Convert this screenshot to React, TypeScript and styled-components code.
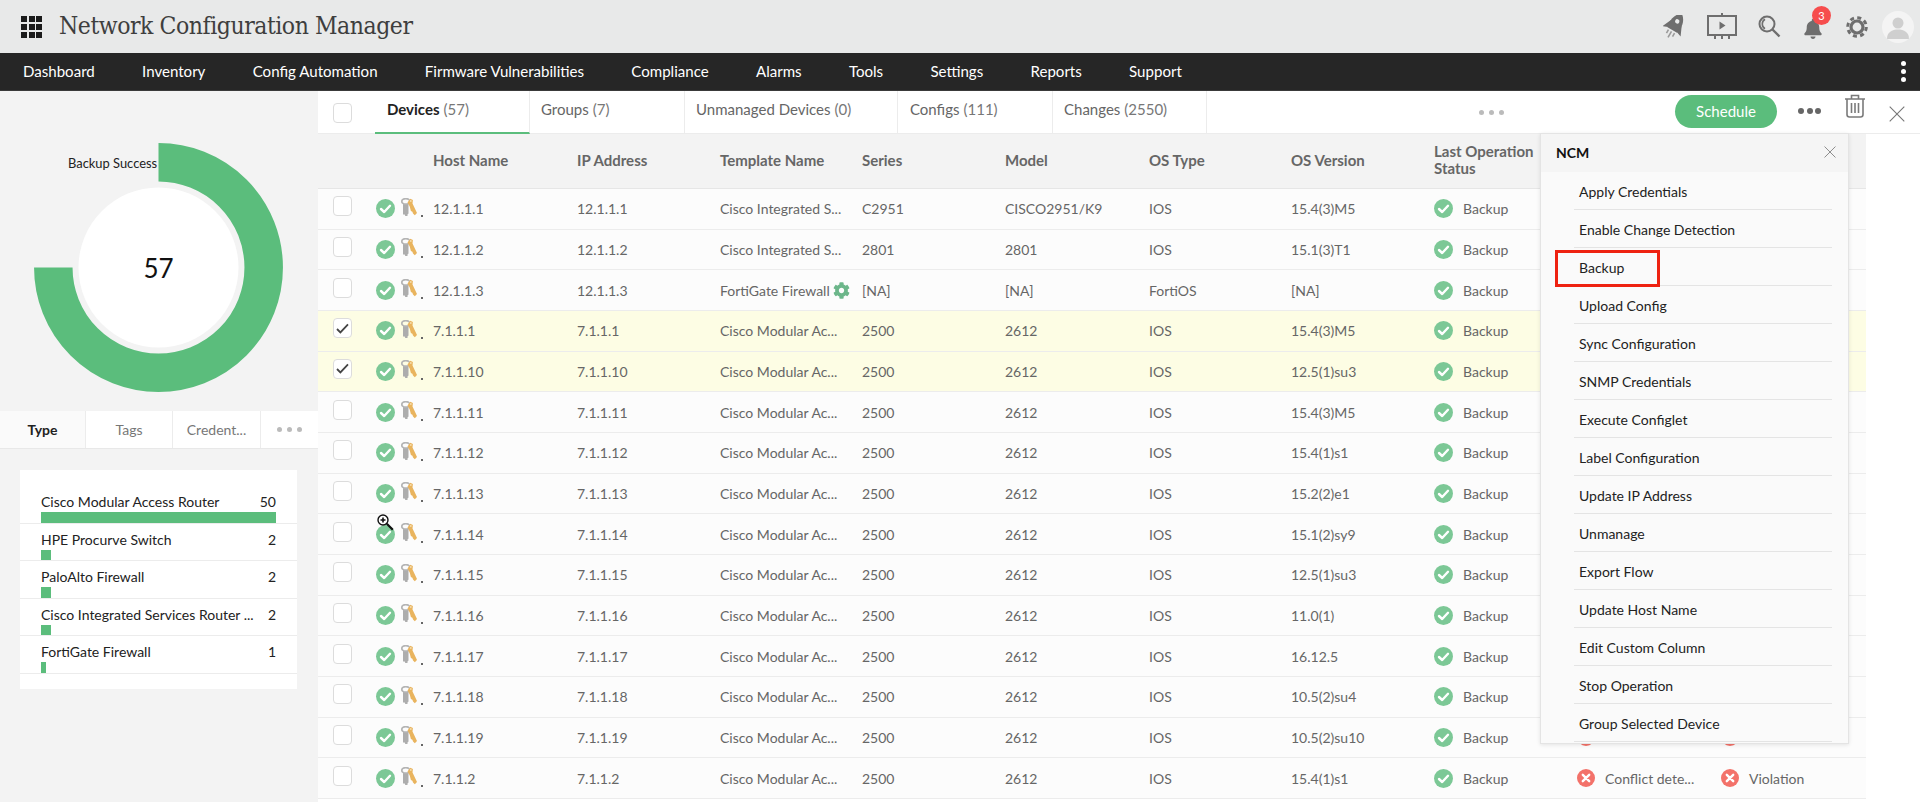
import React from "react";
import styled, { createGlobalStyle } from "styled-components";
import { FaBell, FaCog } from "react-icons/fa";

const Global = createGlobalStyle`
  html, body { margin: 0; padding: 0; background: #fff; }
  body { font-family: Lato, "Noto Sans", sans-serif; overflow: hidden; }
  * { box-sizing: border-box; }
`;

const Page = styled.div`
  width: 1920px;
  height: 802px;
  display: flex;
  flex-direction: column;
  overflow: hidden;
`;

/* ---------- top header ---------- */
const Header = styled.header`
  height: 53px;
  background: #e8e9e9;
  display: flex;
  align-items: center;
  padding-left: 21px;
  flex: none;
`;
const Grid = styled.div`
  display: grid;
  grid-template-columns: repeat(3, 6px);
  grid-auto-rows: 6px;
  gap: 2px 1.5px;
  margin-right: 17px;
`;
const GridDot = styled.i`
  background: #1b1b1b;
  display: block;
`;
const Title = styled.h1`
  margin: -2px 0 0;
  font-family: "DejaVu Serif Condensed", "DejaVu Serif", serif;
  font-stretch: condensed;
  font-weight: 400;
  font-size: 24.5px;
  letter-spacing: -0.46px;
  color: #3e3e3e;
  white-space: nowrap;
`;
const HeaderIcons = styled.div`
  margin-left: auto;
  display: flex;
  align-items: center;
  color: #6e6e6e;
  position: relative;
  height: 53px;
`;
const HIcon = styled.span<{ $w: number; $ml: number }>`
  width: ${(p) => p.$w}px;
  margin-left: ${(p) => p.$ml}px;
  display: flex;
  justify-content: center;
  align-items: center;
  position: relative;
`;
const Badge = styled.span`
  position: absolute;
  top: -9px;
  left: 9px;
  width: 19px;
  height: 19px;
  border-radius: 50%;
  background: #f64d4d;
  color: #fff;
  font-size: 11px;
  display: flex;
  align-items: center;
  justify-content: center;
`;
const Avatar = styled.span`
  width: 32px;
  height: 32px;
  border-radius: 50%;
  background: #f4f4f4;
  margin: 0 6px 0 14px;
  overflow: hidden;
  display: block;
`;

/* ---------- nav ---------- */
const Nav = styled.nav`
  height: 38px;
  flex: none;
  background: #262626;
  border-bottom: 1px solid #3a3a3a;
  display: flex;
  align-items: center;
  padding: 0 14px 2px 23px;
  gap: 47.3px;
`;
const NavItem = styled.a`
  color: #fff;
  font-size: 15.07px;
  white-space: nowrap;
`;
const NavMore = styled.span`
  margin: 2px 0 0 auto;
  display: flex;
  flex-direction: column;
  gap: 2.5px;
`;
const NavDot = styled.i`
  width: 5.5px;
  height: 5.5px;
  border-radius: 50%;
  background: #fff;
  display: block;
`;

/* ---------- body ---------- */
const Body = styled.div`
  flex: 1;
  display: flex;
  min-height: 0;
`;
const Side = styled.aside`
  width: 318px;
  flex: none;
  background: #f3f3f3;
  display: flex;
  flex-direction: column;
`;
const ChartBox = styled.div`
  height: 320px;
  position: relative;
  flex: none;
`;
const ChartLabel = styled.span`
  position: absolute;
  left: 68px;
  top: 64px;
  font-size: 12.9px;
  color: #222;
`;
const ChartValue = styled.span`
  position: absolute;
  left: 0;
  width: 317px;
  top: 161px;
  text-align: center;
  font-size: 26px;
  color: #111;
`;
const SideTabs = styled.div`
  display: flex;
  height: 38px;
  background: #fff;
  flex: none;
  border-bottom: 1px solid #e8e8e8;
`;
const SideTab = styled.div<{ $active?: boolean; $w: number }>`
  width: ${(p) => p.$w}px;
  display: flex;
  align-items: center;
  justify-content: center;
  font-size: 14px;
  font-weight: ${(p) => (p.$active ? 700 : 400)};
  color: ${(p) => (p.$active ? "#222" : "#777")};
  background: ${(p) => (p.$active ? "#fafafa" : "#fff")};
  border-right: 1px solid #ececec;
  &:last-child { border-right: 0; }
`;
const Dots = styled.span<{ $color?: string; $size?: number; $gap?: number }>`
  display: inline-flex;
  gap: ${(p) => p.$gap ?? 5}px;
  i {
    display: block;
    width: ${(p) => p.$size ?? 5}px;
    height: ${(p) => p.$size ?? 5}px;
    border-radius: 50%;
    background: ${(p) => p.$color ?? "#bbb"};
  }
`;
const TypeCard = styled.div`
  margin: 21px 21px 0 20px;
  background: #fff;
  padding: 16px 0;
  height: 219px;
`;
const TypeRow = styled.div`
  height: 37.5px;
  border-bottom: 1px solid #ececec;
  padding: 6.4px 21px 0;
  display: flex;
  flex-direction: column;
`;
const TypeHead = styled.div`
  display: flex;
  justify-content: space-between;
  font-size: 14px;
  line-height: 19px;
  color: #222;
`;
const TypeName = styled.span`
  white-space: nowrap;
`;
const TypeBar = styled.div`
  height: 10.5px;
  margin-top: auto;
  background: #5bbd7c;
`;

/* ---------- main ---------- */
const Main = styled.main`
  flex: 1;
  position: relative;
  background: #fff;
  min-width: 0;
`;
const TabBar = styled.div`
  height: 43px;
  display: flex;
  align-items: stretch;
`;
const CheckCell = styled.div`
  width: 57px;
  flex: none;
  display: flex;
  align-items: center;
  padding: 2px 0 0 15px;
  border-bottom: 1px solid #ececec;
`;
const Tab = styled.div<{ $w: number; $active?: boolean; $pl?: number }>`
  width: ${(p) => p.$w}px;
  flex: none;
  display: flex;
  align-items: center;
  padding: 0 0 6px ${(p) => p.$pl ?? 11}px;
  font-size: 15px;
  color: #666;
  border-right: 1px solid #ececec;
  border-bottom: ${(p) => (p.$active ? "2px solid #5bbd7c" : "1px solid #ececec")};
  b { font-weight: 700; color: #222; margin-right: 4px; }
  span { color: #777; margin-left: 4px; }
  b + span { margin-left: 0; }
`;
const TabFill = styled.div`
  flex: 1;
  display: flex;
  align-items: center;
  padding-left: 272px;
  border-bottom: 1px solid #ececec;
`;
const ActionArea = styled.div`
  width: 245px;
  flex: none;
  display: flex;
  align-items: center;
  padding-bottom: 0;
  position: relative;
  border-bottom: 1px solid #ececec;
`;
const ScheduleBtn = styled.button`
  width: 102px;
  height: 33px;
  border: 0;
  border-radius: 17px;
  background: #5bbd7c;
  color: #fff;
  font-family: inherit;
  font-size: 15px;
  margin-top: -2px;
  flex: none;
`;
const MoreWrap = styled.span`
  margin: -2px 0 0 21px;
  display: inline-flex;
`;
const TrashWrap = styled.span`
  margin: -12px 0 0 23px;
  color: #777;
  display: inline-flex;
`;
const CloseWrap = styled.span`
  margin: 4px 0 0 23px;
  display: inline-flex;
`;

const Row = styled.div<{ $selected?: boolean }>`
  width: 1548px;
  height: 40.67px;
  display: grid;
  grid-template-columns: 115px 144px 143px 142px 143px 144px 142px 143px 143px 144px 145px;
  align-items: center;
  font-size: 14px;
  color: #666;
  background: ${(p) => (p.$selected ? "#fdfde4" : "#fcfcfc")};
  border-bottom: 1px solid #ececec;
`;
const HeadRow = styled(Row)`
  height: 55px;
  background: #f3f3f3;
  font-size: 15px;
  font-weight: 700;
  color: #666;
  border-bottom: 1px solid #e6e6e6;
  line-height: 17px;
  padding-bottom: 2px;
`;
const Cell = styled.div`
  white-space: nowrap;
  min-width: 0;
`;
const HeadCell = styled.div`
  padding-right: 10px;
`;
const TemplateCell = styled(Cell)`
  display: flex;
  align-items: center;
  gap: 3px;
`;
const FirstCell = styled.div`
  display: flex;
  align-items: center;
  padding-left: 15px;
  position: relative;
  height: 100%;
`;
const Box = styled.span<{ $checked?: boolean }>`
  width: 19px;
  height: 20px;
  border: 1px solid #dcdcdc;
  border-radius: 4px;
  background: #fff;
  flex: none;
  display: flex;
  align-items: center;
  justify-content: center;
`;
const RowBox = styled(Box)`
  margin-top: -5px;
`;
const StatusIcons = styled.span`
  display: flex;
  align-items: center;
  margin-left: 24px;
  gap: 6px;
`;
const KeyDot = styled.span`
  width: 2px;
  height: 2px;
  background: #666;
  margin: 15px 0 0 -2px;
  display: block;
`;
const Status = styled.div`
  display: flex;
  align-items: center;
  gap: 10px;
  white-space: nowrap;
  min-width: 0;
`;
const Cursor = styled.svg`
  position: absolute;
  left: 59px;
  top: 0px;
`;

/* ---------- popup ---------- */
const Popup = styled.div`
  position: absolute;
  left: 1222px;
  top: 42px;
  width: 309px;
  height: 611px;
  background: #fafafa;
  border: 1px solid #e4e4e4;
  box-shadow: 0 1px 4px rgba(0, 0, 0, 0.1);
`;
const PopupHead = styled.div`
  height: 38px;
  background: #f5f5f5;
  padding: 0 12px 2px 15px;
  display: flex;
  align-items: center;
  justify-content: space-between;
  font-size: 14px;
  font-weight: 700;
  color: #111;
`;
const MenuItem = styled.div`
  height: 38px;
  margin: 0 16px 0 33px;
  padding: 2px 0 0 5px;
  border-bottom: 1px solid #e4e4e4;
  display: flex;
  align-items: center;
  font-size: 14px;
  color: #222;
`;
const RedBox = styled.span`
  position: absolute;
  left: 14px;
  top: 116px;
  width: 105px;
  height: 37px;
  border: 3px solid #ee2211;
`;

const CheckIcon = ({ size = 19 }: { size?: number }) => (
  <svg width={size} height={size} viewBox="0 0 19 19">
    <circle cx="9.5" cy="9.5" r="9.5" fill="#7cc896" />
    <path d="M5 10l3.2 3L14 6.8" fill="none" stroke="#fff" strokeWidth="2.4" strokeLinecap="round" strokeLinejoin="round" />
  </svg>
);
const CrossIcon = () => (
  <svg width="18" height="18" viewBox="0 0 18 18">
    <circle cx="9" cy="9" r="9" fill="#f3726a" />
    <path d="M5.8 5.8l6.4 6.4M12.2 5.8l-6.4 6.4" fill="none" stroke="#fff" strokeWidth="2.4" strokeLinecap="round" />
  </svg>
);
const KeyIcon = () => (
  <svg width="16" height="19" viewBox="0 0 16 19" style={{ marginTop: -3 }}>
    <path d="M2 6h5.5v9.5l-1 1V18h-2.2l-.6-1.5H2z" fill="#adadad" />
    <ellipse cx="4.8" cy="3.4" rx="4" ry="2.7" fill="none" stroke="#b4b4b4" strokeWidth="1.8" />
    <path d="M6.5 4.5l2.8-3.7 2.6 1.2-.4 3.6 4.5 9.4-2.2 2.2-1.8-1.6-.6-1.9-1.5-.8-1.2-4.4z" fill="#e9b45e" />
    <circle cx="9.8" cy="3" r="0.9" fill="#f5dcae" />
  </svg>
);
const X = ({ size, color }: { size: number; color: string }) => (
  <svg width={size} height={size} viewBox="0 0 16 16">
    <path d="M.7.7l14.6 14.6M15.3.7L.7 15.3" stroke={color} strokeWidth="1.1" fill="none" />
  </svg>
);
const Tick = () => (
  <svg width="13" height="11" viewBox="0 0 13 11">
    <path d="M1 6l3.4 3.4L12 1.4" fill="none" stroke="#444" strokeWidth="1.8" />
  </svg>
);
const ThreeDots = (p: { $color?: string; $size?: number; $gap?: number }) => (
  <Dots {...p}><i /><i /><i /></Dots>
);
const RocketIcon = () => (
  <svg width="22" height="24" viewBox="0 0 22 24" style={{ marginTop: 1 }}>
    <g transform="rotate(30 11 12)">
      <path d="M11 -3.5C16 0 17.5 5 17.5 11L16.5 15.5L5.5 15.5L4.5 11C4.5 5 6 0 11 -3.5z" fill="#6e6e6e" />
      <path d="M5 7L0.5 17L6 15zM17 7L21.5 17L16 15z" fill="#6e6e6e" />
      <circle cx="11" cy="5.5" r="2.2" fill="#e8e9e9" />
      <path d="M7.5 17v4M11 17v7M14.5 17v4" stroke="#9a9a9a" strokeWidth="1.6" />
    </g>
  </svg>
);
const GearIcon = () => (
  <svg width="22" height="22" viewBox="0 0 22 22" fill="none" stroke="#6e6e6e">
    <circle cx="11" cy="11" r="9.3" strokeWidth="3" strokeDasharray="4 3.3" />
    <circle cx="11" cy="11" r="6" strokeWidth="3.2" />
  </svg>
);

const navItems = ["Dashboard", "Inventory", "Config Automation", "Firmware Vulnerabilities", "Compliance", "Alarms", "Tools", "Settings", "Reports", "Support"];
const types = [
  { n: "Cisco Modular Access Router", v: 50, w: 235 },
  { n: "HPE Procurve Switch", v: 2, w: 10 },
  { n: "PaloAlto Firewall", v: 2, w: 10 },
  { n: "Cisco Integrated Services Router ...", v: 2, w: 10 },
  { n: "FortiGate Firewall", v: 1, w: 5 },
];
const menu = ["Apply Credentials", "Enable Change Detection", "Backup", "Upload Config", "Sync Configuration", "SNMP Credentials", "Execute Configlet", "Label Configuration", "Update IP Address", "Unmanage", "Export Flow", "Update Host Name", "Edit Custom Column", "Stop Operation", "Group Selected Device"];
const CMA = "Cisco Modular Ac...";
const CIS = "Cisco Integrated S...";
type D = [string, string, string, string, string, string, boolean?, boolean?];
const rows: D[] = [
  ["12.1.1.1", CIS, "C2951", "CISCO2951/K9", "IOS", "15.4(3)M5"],
  ["12.1.1.2", CIS, "2801", "2801", "IOS", "15.1(3)T1"],
  ["12.1.1.3", "FortiGate Firewall", "[NA]", "[NA]", "FortiOS", "[NA]"],
  ["7.1.1.1", CMA, "2500", "2612", "IOS", "15.4(3)M5", true],
  ["7.1.1.10", CMA, "2500", "2612", "IOS", "12.5(1)su3", true],
  ["7.1.1.11", CMA, "2500", "2612", "IOS", "15.4(3)M5"],
  ["7.1.1.12", CMA, "2500", "2612", "IOS", "15.4(1)s1"],
  ["7.1.1.13", CMA, "2500", "2612", "IOS", "15.2(2)e1"],
  ["7.1.1.14", CMA, "2500", "2612", "IOS", "15.1(2)sy9"],
  ["7.1.1.15", CMA, "2500", "2612", "IOS", "12.5(1)su3"],
  ["7.1.1.16", CMA, "2500", "2612", "IOS", "11.0(1)"],
  ["7.1.1.17", CMA, "2500", "2612", "IOS", "16.12.5"],
  ["7.1.1.18", CMA, "2500", "2612", "IOS", "10.5(2)su4"],
  ["7.1.1.19", CMA, "2500", "2612", "IOS", "10.5(2)su10", false, true],
  ["7.1.1.2", CMA, "2500", "2612", "IOS", "15.4(1)s1", false, true],
];

export default function App() {
  return (
    <Page>
      <Global />
      <Header>
        <Grid>{Array.from({ length: 9 }).map((_, i) => <GridDot key={i} />)}</Grid>
        <Title>Network Configuration Manager</Title>
        <HeaderIcons>
          <HIcon $w={22} $ml={0}><RocketIcon /></HIcon>
          <HIcon $w={30} $ml={22}>
            <svg width="30" height="27" viewBox="0 0 30 27" fill="none" stroke="#6e6e6e" strokeWidth="2">
              <rect x="1" y="3" width="28" height="19" />
              <path d="M15 0v3M8 22v4M15 22v4M22 22v4" />
              <path d="M12.5 8.5l6 4-6 4z" fill="#6e6e6e" stroke="none" />
            </svg>
          </HIcon>
          <HIcon $w={23} $ml={21}>
            <svg width="23" height="23" viewBox="0 0 23 23" fill="none" stroke="#6e6e6e">
              <circle cx="9" cy="9" r="7.5" strokeWidth="2" />
              <path d="M7 4.2A5.6 5.6 0 0 0 7 13.8" strokeWidth="1.6" />
              <path d="M14.5 14.5l7 7" strokeWidth="2.4" />
            </svg>
          </HIcon>
          <HIcon $w={20} $ml={22}>
            <FaBell size={20} style={{ marginTop: 4 }} />
            <Badge>3</Badge>
          </HIcon>
          <HIcon $w={22} $ml={23}><GearIcon /></HIcon>
          <Avatar>
            <svg width="32" height="32" viewBox="0 0 32 32" fill="#cfcfcf">
              <circle cx="16" cy="12" r="5.5" />
              <path d="M5 28c0-7 5-9.5 11-9.5S27 21 27 28z" />
            </svg>
          </Avatar>
        </HeaderIcons>
      </Header>
      <Nav>
        {navItems.map((n) => <NavItem key={n}>{n}</NavItem>)}
        <NavMore><NavDot /><NavDot /><NavDot /></NavMore>
      </Nav>
      <Body>
        <Side>
          <ChartBox>
            <svg width="318" height="320" viewBox="0 0 318 320">
              <path d="M158.5 71.3A105.2 105.2 0 1 1 53.3 176.5" fill="none" stroke="#5bbd7c" strokeWidth="38.5" />
              <circle cx="158.5" cy="176.5" r="80" fill="#fff" />
            </svg>
            <ChartLabel>Backup Success</ChartLabel>
            <ChartValue>57</ChartValue>
          </ChartBox>
          <SideTabs>
            <SideTab $active $w={86}>Type</SideTab>
            <SideTab $w={87}>Tags</SideTab>
            <SideTab $w={88}>Credent...</SideTab>
            <SideTab $w={57}><ThreeDots $color="#bbb" /></SideTab>
          </SideTabs>
          <TypeCard>
            {types.map((t) => (
              <TypeRow key={t.n}>
                <TypeHead><TypeName>{t.n}</TypeName><span>{t.v}</span></TypeHead>
                <TypeBar style={{ width: t.w }} />
              </TypeRow>
            ))}
          </TypeCard>
        </Side>
        <Main>
          <TabBar>
            <CheckCell><Box /></CheckCell>
            <Tab $w={155} $active $pl={12}><b>Devices</b><span>(57)</span></Tab>
            <Tab $w={155}>Groups<span>(7)</span></Tab>
            <Tab $w={213}>Unmanaged Devices<span>(0)</span></Tab>
            <Tab $w={155} $pl={12}>Configs<span>(111)</span></Tab>
            <Tab $w={154}>Changes<span>(2550)</span></Tab>
            <TabFill><ThreeDots $color="#bbb" /></TabFill>
            <ActionArea>
              <ScheduleBtn>Schedule</ScheduleBtn>
              <MoreWrap><ThreeDots $color="#666" $size={6} $gap={2.5} /></MoreWrap>
              <TrashWrap>
                <svg width="22" height="24" viewBox="0 0 22 24" fill="none" stroke="#7a7a7a" strokeWidth="1.6">
                  <path d="M1 5h20M7.5 5V1.5h7V5M3 5v15.5a2.5 2.5 0 0 0 2.5 2.5h11a2.5 2.5 0 0 0 2.5-2.5V5M7.5 9v10M11 9v10M14.5 9v10" />
                </svg>
              </TrashWrap>
              <CloseWrap><X size={16} color="#777" /></CloseWrap>
            </ActionArea>
          </TabBar>
          <HeadRow>
            <div />
            <HeadCell>Host Name</HeadCell>
            <HeadCell>IP Address</HeadCell>
            <HeadCell>Template Name</HeadCell>
            <HeadCell>Series</HeadCell>
            <HeadCell>Model</HeadCell>
            <HeadCell>OS Type</HeadCell>
            <HeadCell>OS Version</HeadCell>
            <HeadCell>Last Operation Status</HeadCell>
            <HeadCell />
            <HeadCell />
          </HeadRow>
          {rows.map((r) => (
            <Row key={r[0]} $selected={r[6]}>
              <FirstCell>
                <RowBox>{r[6] && <Tick />}</RowBox>
                <StatusIcons>
                  <CheckIcon />
                  <KeyIcon />
                  <KeyDot />
                </StatusIcons>
                {r[0] === "7.1.1.14" && (
                  <Cursor width="17" height="17" viewBox="0 0 17 17" fill="none">
                    <circle cx="6" cy="6" r="5" fill="#fff" stroke="#111" strokeWidth="1.4" />
                    <path d="M3.5 6h5M6 3.5v5" stroke="#111" strokeWidth="1.6" />
                    <path d="M9.8 9.8l6 6" stroke="#111" strokeWidth="2.2" />
                  </Cursor>
                )}
              </FirstCell>
              <Cell>{r[0]}</Cell>
              <Cell>{r[0]}</Cell>
              <TemplateCell>
                {r[1]}
                {r[1] === "FortiGate Firewall" && <FaCog size={17} color="#6cb68a" />}
              </TemplateCell>
              <Cell>{r[2]}</Cell>
              <Cell>{r[3]}</Cell>
              <Cell>{r[4]}</Cell>
              <Cell>{r[5]}</Cell>
              <Status><CheckIcon /><span>Backup</span></Status>
              {r[7] ? <Status><CrossIcon />{r[0] === "7.1.1.2" && <span>Conflict dete...</span>}</Status> : <div />}
              {r[7] ? <Status><CrossIcon />{r[0] === "7.1.1.2" && <span>Violation</span>}</Status> : <div />}
            </Row>
          ))}
          <Popup>
            <PopupHead>NCM<X size={12} color="#777" /></PopupHead>
            {menu.map((m) => <MenuItem key={m}>{m}</MenuItem>)}
            <RedBox />
          </Popup>
        </Main>
      </Body>
    </Page>
  );
}
